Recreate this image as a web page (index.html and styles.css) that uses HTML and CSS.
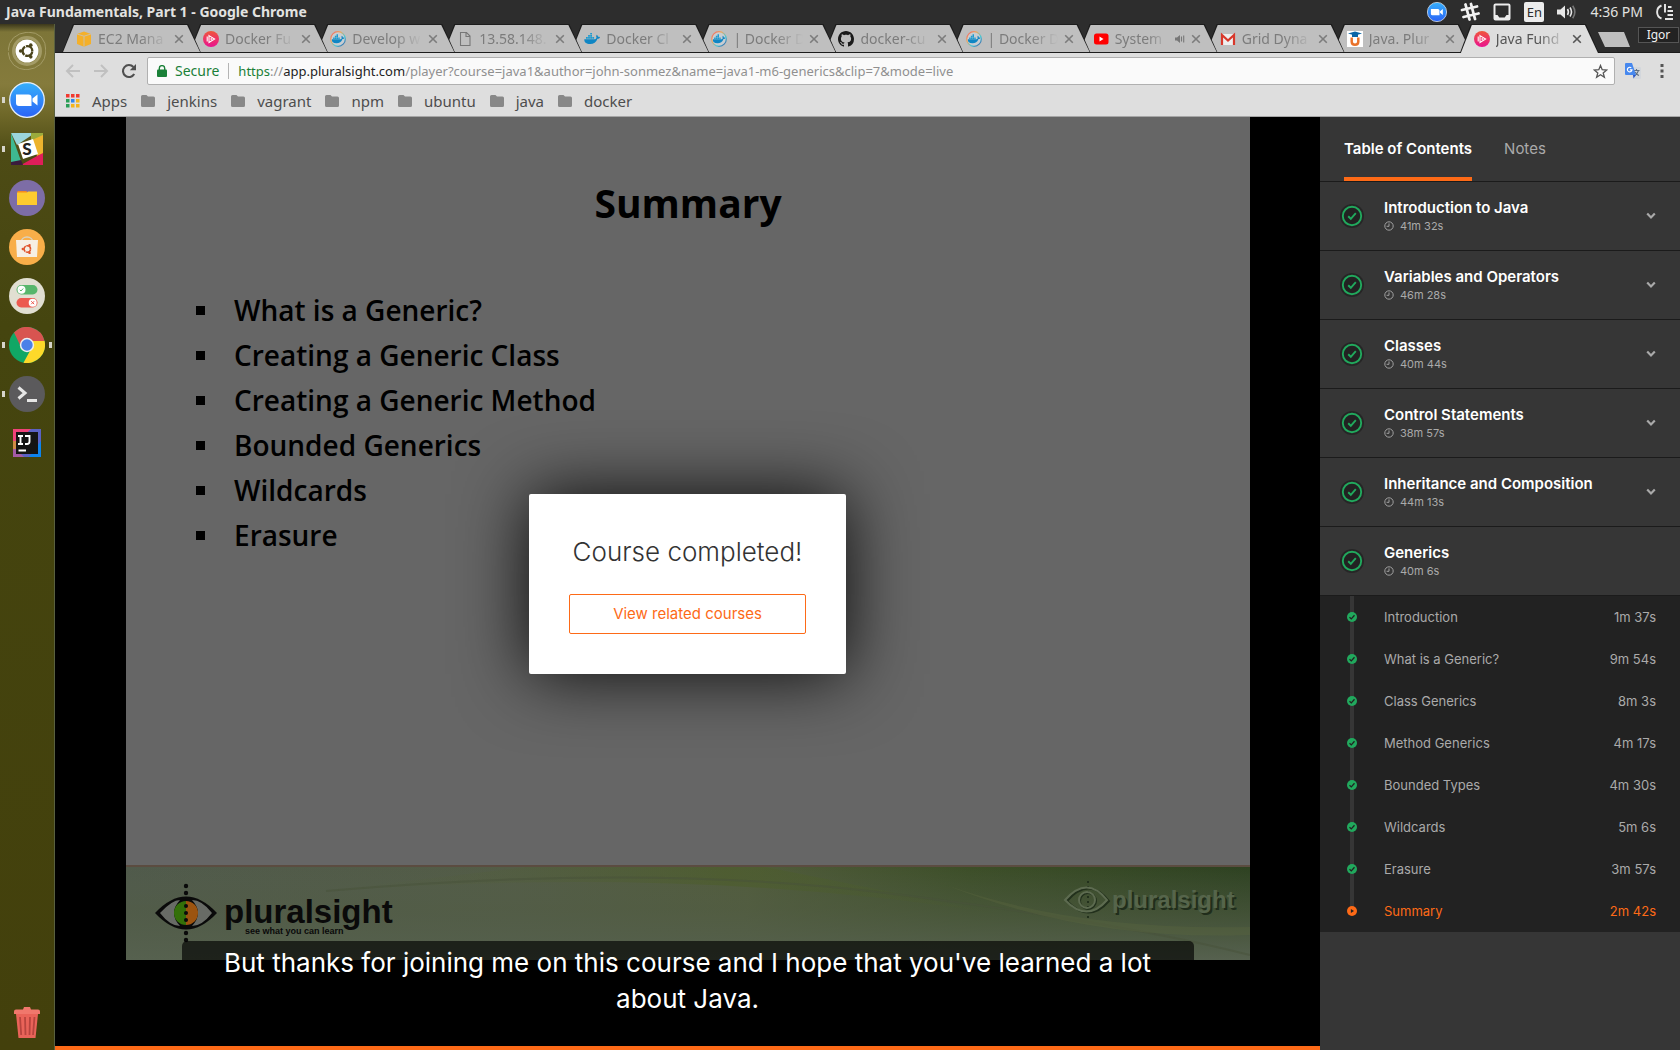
FILE: index.html
```html
<!DOCTYPE html>
<html lang="en">
<head>
<meta charset="utf-8">
<title>Java Fundamentals, Part 1 - Google Chrome</title>
<link rel="stylesheet" href="styles.css">
</head>
<body>
<svg class="defs" aria-hidden="true">
  <defs>
    <linearGradient id="ps" x1="0" y1="0" x2="0" y2="1"><stop offset="0" stop-color="#f0563a"/><stop offset="1" stop-color="#ea1290"/></linearGradient>
    <linearGradient id="zm" x1="0" y1="0" x2="0" y2="1"><stop offset="0" stop-color="#35b0fb"/><stop offset="1" stop-color="#2b63f6"/></linearGradient>
    <linearGradient id="ring" x1="0" y1="0" x2="1" y2="1"><stop offset="0" stop-color="#ee5c6c"/><stop offset=".35" stop-color="#f0a85a"/><stop offset=".65" stop-color="#41c9d8"/><stop offset="1" stop-color="#3b4a9a"/></linearGradient>
  </defs>
  <symbol id="i-close" viewBox="0 0 10 10"><path d="M1.2 1.2l7.6 7.6M8.8 1.2L1.2 8.8" fill="none" stroke="currentColor" stroke-width="1.6"/></symbol>
  <symbol id="i-folder" viewBox="0 0 14 12"><path d="M0 1.500Q0 0 1.500 0H5.500L7 1.500H12.500Q14 1.500 14 3V10.500Q14 12 12.500 12H1.500Q0 12 0 10.500Z" fill="#888"/></symbol>
  <symbol id="i-ps" viewBox="0 0 16 16"><circle cx="8" cy="8" r="8" fill="url(#ps)"/><path d="M6 4.600L11.600 8 6 11.400zM4.200 5.500v5" fill="none" stroke="#fff" stroke-width="1.100"/><path d="M7.600 6.700L9.800 8 7.600 9.300z" fill="#fff"/></symbol>
  <symbol id="i-whale" viewBox="0 0 16 16"><path d="M.3 8.200h10.800c.8-.2 1.400-.8 1.400-1.700-.5-.9-.4-1.900.3-2.700.8.5 1.200 1.200 1.200 2 .7-.1 1.400 0 2 .4-.4 1-1.300 1.500-2.500 1.500C12.300 11.300 9.600 13 6.200 13 2.200 13 .1 11.300.3 8.200z" fill="#0f86c4"/><path d="M2 6h1.800v1.800H2zM4.100 6h1.800v1.800H4.100zM6.200 6H8v1.800H6.200zM8.300 6h1.800v1.800H8.300zM4.100 3.900h1.800v1.800H4.100zM6.200 3.900H8v1.800H6.200zM6.200 2H8v1.600H6.200z" fill="#1c9bd0"/></symbol>
  <symbol id="i-dockerdoc" viewBox="0 0 16 16"><circle cx="8" cy="8" r="7.300" fill="#c8cdd2" stroke="url(#ring)" stroke-width="1.200"/><use href="#i-whale" x="1.500" y="1.700" width="13" height="13"/></symbol>
  <symbol id="i-tick" viewBox="0 0 24 24"><circle cx="12" cy="12" r="12" fill="#262626"/><circle cx="12" cy="12" r="9.200" fill="#222" stroke="#21a95d" stroke-width="1.900"/><path d="M8.200 12.300l2.600 2.500 5-5.600" fill="none" stroke="#21a95d" stroke-width="1.900"/></symbol>
  <symbol id="i-clock" viewBox="0 0 10 10"><circle cx="5" cy="5" r="4.200" fill="none" stroke="#a0a0a0"/><path d="M5 2.400V5.300H2.600" fill="none" stroke="#a0a0a0"/></symbol>
  <symbol id="i-down" viewBox="0 0 10 8"><path d="M1.200 1.500L5 5.400 8.800 1.500" fill="none" stroke="#a9a9a9" stroke-width="2.200"/></symbol>
  <symbol id="i-done" viewBox="0 0 10 10"><circle cx="5" cy="5" r="5" fill="#21a95d"/><path d="M2.500 5.200l1.800 1.700 3.200-3.600" fill="none" stroke="#222" stroke-width="1.300"/></symbol>
  <symbol id="i-playing" viewBox="0 0 10 10"><circle cx="5" cy="5" r="5" fill="#fd6a17"/><path d="M3.900 2.900L7 5 3.900 7.100z" fill="#222"/></symbol>
  <symbol id="i-zoom" viewBox="0 0 36 36"><circle cx="18" cy="18" r="17.300" fill="url(#zm)" stroke="#e4eefb" stroke-width="1.300"/><path d="M7 12.500h12.500q3 0 3 3v8.500H10q-3 0-3-3zM23.500 16.500l5-4v11l-5-4z" fill="#fff"/></symbol>
  <symbol id="i-ubuntu" viewBox="0 0 20 20"><circle cx="10.500" cy="10" r="5.400" fill="none" stroke="currentColor" stroke-width="2.600" stroke-dasharray="10.310 1" stroke-dashoffset="-.5"/><circle cx="3" cy="10" r="2" fill="currentColor"/><circle cx="14.200" cy="3.500" r="2" fill="currentColor"/><circle cx="14.200" cy="16.500" r="2" fill="currentColor"/></symbol>
</svg>

<header class="panel">
  <span class="panel-title">Java Fundamentals, Part 1 - Google Chrome</span>
  <div class="tray">
    <svg width="20" height="20"><use href="#i-zoom"/></svg>
    <svg width="20" height="20" viewBox="0 0 20 20"><path d="M5.500 2.500l4 15M11 2l4 15M2 8l15-3.500M3.500 15l15-3.500" stroke="#f2f2f2" stroke-width="2.800" stroke-linecap="round"/></svg>
    <svg width="18" height="18" viewBox="0 0 18 18"><path d="M2.500 1.500h13q1 0 1 1v13q0 1-1 1h-13q-1 0-1-1v-13q0-1 1-1z" fill="none" stroke="#ececec" stroke-width="2"/><path d="M2 12h2.500l1.800 2.500h5.400L13.500 12H16v4H2z" fill="#ececec"/></svg>
    <span class="lang">En</span>
    <svg width="20" height="16" viewBox="0 0 20 16"><path d="M0 5.500h3.500L8 1.500v13L3.500 10.500H0z" fill="#e6e6e6"/><path d="M10.500 5q1.800 3 0 6M13 3.500q3 4.500 0 9" fill="none" stroke="#e6e6e6" stroke-width="1.600"/><path d="M15.700 1.800q4.300 6.200 0 12.400" fill="none" stroke="#777" stroke-width="1.600"/></svg>
    <time>4:36 PM</time>
    <svg width="18" height="18" viewBox="0 0 18 18"><path d="M5.500 2.500a7 7 0 0 0 0 13M9 1v8.500M12 4h3.500M11.500 8H17M11.500 12H17M9 16h8" fill="none" stroke="#e6e6e6" stroke-width="1.900"/></svg>
  </div>
</header>

<nav class="launcher" aria-label="Launcher">
  <a href="#" aria-label="Dash"><svg width="38" height="38" viewBox="0 0 38 38"><path d="M0 19Q1 2 20 0M38 19Q37 36 18 38M19 0Q38 0 38 20M19 38Q2 37 0 20" fill="none" stroke="#a39b66" stroke-width="1"/><circle cx="19" cy="19" r="13.500" fill="none" stroke="#a39b66" stroke-width="3"/><circle cx="19" cy="19" r="11.500" fill="#fff"/><g color="#4b441c"><use href="#i-ubuntu" x="10" y="10" width="18" height="18"/></g></svg></a>
  <a href="#" aria-label="Zoom" class="running"><svg width="36" height="36"><use href="#i-zoom"/></svg></a>
  <a href="#" aria-label="Slack" class="running"><svg width="32" height="32" viewBox="0 0 32 32"><path d="M0 0h24L6 12z" fill="#9bd5dd"/><path d="M20 0h12v4L20 8z" fill="#9aab3c"/><path d="M32 2v19l-6 2-5-16z" fill="#ecb32e"/><path d="M32 20v12H10l16-9z" fill="#e01e5a"/><path d="M0 0l10 28-10 3z" fill="#3eb991"/><path d="M0 29l10-2 2 5H0z" fill="#3a1c3c"/><path d="M7 11l15-5 5 15-15 5z" fill="#fff"/><text x="16" y="22" class="slack-s">S</text></svg></a>
  <a href="#" aria-label="Files"><svg width="36" height="36" viewBox="0 0 36 36"><circle cx="18" cy="18" r="18" fill="#7d6da6"/><path d="M8.500 11h9l1 2h-10z" fill="#f58a1f"/><path d="M8 12.500h10l1-1H28V25H8z" fill="#fecb2f"/></svg></a>
  <a href="#" aria-label="Software"><svg width="36" height="36" viewBox="0 0 36 36"><circle cx="18" cy="18" r="18" fill="#f8ae49"/><path d="M12 14c0-8 12-8 12 0" fill="none" stroke="#d9d2c0" stroke-width="1.500"/><path d="M7 11h22l-1 17H8z" fill="#f6efe4"/><g color="#e0532b"><use href="#i-ubuntu" x="12" y="14" width="12" height="12"/></g></svg></a>
  <a href="#" aria-label="Settings"><svg width="36" height="36" viewBox="0 0 36 36"><circle cx="18" cy="18" r="18" fill="#e1dfd2"/><rect x="7.500" y="7" width="21" height="9.500" rx="4.700" fill="#57b66c"/><circle cx="12.500" cy="11.700" r="4" fill="#fff"/><path d="M10.800 11.800l1.200 1.200 2.200-2.500" fill="none" stroke="#57b66c"/><rect x="7.500" y="20" width="21" height="9.500" rx="4.700" fill="#ec5a50"/><circle cx="23.700" cy="24.700" r="4" fill="#fff"/><path d="M22.200 23.200l3 3M25.200 23.200l-3 3" stroke="#ec5a50"/></svg></a>
  <a href="#" aria-label="Chrome" class="running focused"><svg width="36" height="36" viewBox="0 0 36 36"><circle cx="18" cy="18" r="18" fill="#10a765"/><path d="M5 5.600A18 18 0 0 1 35.600 14H18l-7 4z" fill="#d85450"/><path d="M18 14H35.600A18 18 0 0 1 14.500 35.700L22 22z" fill="#fdd92a"/><circle cx="18" cy="18" r="7.200" fill="#eee"/><circle cx="18" cy="18" r="5.700" fill="#4a80e8"/></svg></a>
  <a href="#" aria-label="Terminal" class="running"><svg width="36" height="36" viewBox="0 0 36 36"><circle cx="18" cy="18" r="18" fill="#5b5a5c"/><path d="M9.500 11.500L16 17l-6.500 5.500" fill="none" stroke="#e6e6e6" stroke-width="3"/><path d="M18 23h10v3H18z" fill="#e6e6e6"/></svg></a>
  <a href="#" aria-label="IntelliJ IDEA"><svg width="28" height="28" viewBox="0 0 28 28"><path d="M0 0h28v28H0z" fill="#5a62c4"/><path d="M0 0h18L3 14H0z" fill="#f0427a"/><path d="M0 12h3v9H0z" fill="#cf8a45"/><path d="M28 12v16H16z" fill="#0d84ec"/><path d="M0 20h3l8 8H0z" fill="#a45aa6"/><path d="M3 3h22v22H3z" fill="#141414"/><path d="M5 7h5M7.500 7v8M5 15h5M12 7h4.500v5.500q0 2.500-2.500 2.500h-2M5.500 21.500H13" fill="none" stroke="#fff" stroke-width="1.900"/></svg></a>
  <a href="#" aria-label="Trash" class="trash"><svg width="28" height="32" viewBox="0 0 28 32"><path d="M3 8h22l-2.500 24h-17z" fill="#e96359"/><path d="M7 11l1.200 18M12 11l.5 18M17 11l-.5 18M21.500 11l-1.500 18" stroke="#b8443e" stroke-width="1.800"/><path d="M1 5.500Q1 3.500 3 3.500h7L11 1h6l1 2.500h7q2 0 2 2V8H1z" fill="#f0776c"/></svg></a>
</nav>

<div class="browser">
  <div class="tabstrip">
    <ul class="tabs">
      <li class="tab"><svg width="16" height="16" viewBox="0 0 16 16"><path d="M1 3l7-2.500L15 3v10l-7 2.700L1 13z" fill="#f4b02a"/><path d="M1 3l7 2.200L15 3M8 5.200v10.500" fill="none" stroke="#c9c2b0" stroke-width=".9"/></svg><a href="#">EC2 Mana</a><button aria-label="Close tab"><svg width="10" height="10"><use href="#i-close"/></svg></button></li>
      <li class="tab"><svg width="16" height="16"><use href="#i-ps"/></svg><a href="#">Docker Fu</a><button aria-label="Close tab"><svg width="10" height="10"><use href="#i-close"/></svg></button></li>
      <li class="tab"><svg width="16" height="16"><use href="#i-dockerdoc"/></svg><a href="#">Develop w</a><button aria-label="Close tab"><svg width="10" height="10"><use href="#i-close"/></svg></button></li>
      <li class="tab"><svg width="16" height="16" viewBox="0 0 16 16"><path d="M3.500 1.500h6l3.500 3.500v9.500H3.500zM9 1.500V5.500h4" fill="none" stroke="#777" stroke-width="1.100"/></svg><a href="#">13.58.148.</a><button aria-label="Close tab"><svg width="10" height="10"><use href="#i-close"/></svg></button></li>
      <li class="tab"><svg width="16" height="16"><use href="#i-whale"/></svg><a href="#">Docker Cl</a><button aria-label="Close tab"><svg width="10" height="10"><use href="#i-close"/></svg></button></li>
      <li class="tab"><svg width="16" height="16"><use href="#i-dockerdoc"/></svg><a href="#">| Docker D</a><button aria-label="Close tab"><svg width="10" height="10"><use href="#i-close"/></svg></button></li>
      <li class="tab"><svg width="16" height="16" viewBox="0 0 16 16"><path fill="#1b1b1b" d="M8 0C3.580 0 0 3.580 0 8c0 3.540 2.290 6.530 5.470 7.590.4.070.55-.17.55-.38 0-.19-.01-.82-.01-1.490-2.010.37-2.530-.49-2.690-.94-.09-.23-.48-.94-.82-1.130-.28-.15-.68-.52-.01-.53.63-.01 1.080.58 1.230.82.72 1.210 1.870.87 2.330.66.070-.52.28-.87.51-1.070-1.780-.2-3.640-.89-3.640-3.950 0-.87.31-1.590.82-2.150-.08-.2-.36-1.020.08-2.120 0 0 .67-.21 2.200.82.64-.18 1.320-.27 2-.27s1.360.09 2 .27c1.530-1.040 2.200-.82 2.200-.82.44 1.100.16 1.920.08 2.120.51.56.82 1.270.82 2.150 0 3.070-1.870 3.750-3.650 3.950.29.25.54.73.54 1.480 0 1.070-.01 1.930-.01 2.200 0 .21.15.46.55.38A8.010 8.010 0 0 0 16 8c0-4.420-3.580-8-8-8z"/></svg><a href="#">docker-cu</a><button aria-label="Close tab"><svg width="10" height="10"><use href="#i-close"/></svg></button></li>
      <li class="tab"><svg width="16" height="16"><use href="#i-dockerdoc"/></svg><a href="#">| Docker D</a><button aria-label="Close tab"><svg width="10" height="10"><use href="#i-close"/></svg></button></li>
      <li class="tab"><svg width="16" height="16" viewBox="0 0 16 16"><rect x="1" y="2.500" width="14.500" height="11" rx="2.500" fill="#f00"/><path d="M6.500 5.500L10.500 8l-4 2.500z" fill="#fff"/></svg><a href="#">System</a><svg class="audio" width="10" height="10" viewBox="0 0 10 10"><path d="M0 3.500h2L5 1v8L2 6.500H0z" fill="#777"/><path d="M6.500 2.500v5M8.700 1.500v7" stroke="#777" stroke-width="1.100"/></svg><button aria-label="Close tab"><svg width="10" height="10"><use href="#i-close"/></svg></button></li>
      <li class="tab"><svg width="16" height="16" viewBox="0 0 16 16"><path d="M1 3h14v11H1z" fill="#eee"/><path d="M2 14V4l6 5.500L14 4v10" fill="none" stroke="#d8382b" stroke-width="2.200"/></svg><a href="#">Grid Dyna</a><button aria-label="Close tab"><svg width="10" height="10"><use href="#i-close"/></svg></button></li>
      <li class="tab"><svg width="16" height="16" viewBox="0 0 16 16"><path d="M0 0h16v16H0z" fill="#fff"/><path d="M1 2.500L8 .5l7 2-7 2zM5 3.500h6V6H5z" fill="#0a66a8"/><path d="M4.700 6.500v4.300q0 3 3.300 3 3.300 0 3.300-3V6.500" fill="none" stroke="#e9722a" stroke-width="2.500"/></svg><a href="#">Java. Plur</a><button aria-label="Close tab"><svg width="10" height="10"><use href="#i-close"/></svg></button></li>
      <li class="tab active"><svg width="16" height="16"><use href="#i-ps"/></svg><a href="#" aria-current="page">Java Fund</a><button aria-label="Close tab"><svg width="10" height="10"><use href="#i-close"/></svg></button></li>
    </ul>
    <button class="new-tab" aria-label="New tab"></button>
    <button class="profile">Igor</button>
  </div>

  <div class="toolbar">
    <div class="history">
      <button aria-label="Back"><svg width="16" height="16" viewBox="0 0 16 16"><path d="M15 8H2M8 2L2 8l6 6" fill="none" stroke="#c0c0c0" stroke-width="2"/></svg></button>
      <button aria-label="Forward"><svg width="16" height="16" viewBox="0 0 16 16"><path d="M1 8h13M8 2l6 6-6 6" fill="none" stroke="#c0c0c0" stroke-width="2"/></svg></button>
      <button aria-label="Reload"><svg width="16" height="16" viewBox="0 0 16 16"><path d="M13.200 11A6 6 0 1 1 12.400 4" fill="none" stroke="#4f4f4f" stroke-width="2.100"/><path d="M15 1v6.200H8.800z" fill="#4f4f4f"/></svg></button>
    </div>
    <div class="address">
      <svg width="10" height="12" viewBox="0 0 10 12"><rect x="0" y="4.500" width="10" height="7.500" rx="1" fill="#1a8038"/><path d="M2.300 5V3.300a2.700 2.700 0 0 1 5.400 0V5" fill="none" stroke="#1a8038" stroke-width="1.400"/></svg>
      <span class="secure">Secure</span>
      <span class="url" role="textbox" contenteditable="true" spellcheck="false" aria-label="Address"><span class="scheme">https</span>://<span class="host">app.pluralsight.com</span>/player?course=java1&amp;author=john-sonmez&amp;name=java1-m6-generics&amp;clip=7&amp;mode=live</span>
      <button aria-label="Bookmark this page"><svg width="15" height="15" viewBox="0 0 15 15"><path d="M7.500 1.500l1.700 4.200 4.500.3-3.500 2.900 1.200 4.400-3.900-2.500-3.900 2.500 1.200-4.400L1.300 6l4.500-.3z" fill="none" stroke="#555" stroke-width="1.300"/></svg></button>
    </div>
    <button aria-label="Translate"><svg width="16" height="16" viewBox="0 0 16 16"><path d="M6 4h9q1 0 1 1v10q0 1-1 1H8z" fill="#d3d7dc"/><path d="M8.500 7.500h6M11.500 6v1.500M13.300 8q-1 3-3.800 4.500M10 9q1.500 2.500 4 3.500" fill="none" stroke="#607080" stroke-width="1.100"/><path d="M1 0h6l4 12H1Q0 12 0 11V1Q0 0 1 0z" fill="#4788ee"/><path d="M8 12h3l-2.500 3.500z" fill="#2a56c6"/><path d="M6.300 4.900A2.300 2.300 0 1 0 7 6.800H4.800" fill="none" stroke="#fff" stroke-width="1.200"/></svg></button>
    <button aria-label="Menu"><svg width="22" height="14" viewBox="0 0 22 14"><path d="M9.500 0h3v3h-3zM9.500 5.500h3v3h-3zM9.500 11h3v3h-3z" fill="#555"/></svg></button>
  </div>

  <nav class="bookmarks" aria-label="Bookmarks">
    <a href="#"><svg width="14" height="14" viewBox="0 0 14 14"><path d="M0 0h3.500v3.500H0zM5 0h3.500v3.500H5zM10 0h3.500v3.500H10z" fill="#f1392f"/><path d="M0 5h3.500v3.500H0zM0 10h3.500v3.500H0z" fill="#2a9e56"/><path d="M5 5h3.500v3.500H5z" fill="#2f86ee"/><path d="M10 5h3.500v3.500H10zM5 10h3.500v3.500H5zM10 10h3.500v3.500H10z" fill="#f4b41c"/></svg>Apps</a>
    <a href="#"><svg width="14" height="12"><use href="#i-folder"/></svg>jenkins</a>
    <a href="#"><svg width="14" height="12"><use href="#i-folder"/></svg>vagrant</a>
    <a href="#"><svg width="14" height="12"><use href="#i-folder"/></svg>npm</a>
    <a href="#"><svg width="14" height="12"><use href="#i-folder"/></svg>ubuntu</a>
    <a href="#"><svg width="14" height="12"><use href="#i-folder"/></svg>java</a>
    <a href="#"><svg width="14" height="12"><use href="#i-folder"/></svg>docker</a>
  </nav>

  <div class="page">
    <main class="player">
      <section class="slide">
        <h1>Summary</h1>
        <ul>
          <li>What is a Generic?</li>
          <li>Creating a Generic Class</li>
          <li>Creating a Generic Method</li>
          <li>Bounded Generics</li>
          <li>Wildcards</li>
          <li>Erasure</li>
        </ul>
        <svg class="slide-footer" viewBox="0 0 1124 95">
          <defs>
            <linearGradient id="fa" x1="0" y1="0" x2="1" y2="0"><stop offset="0" stop-color="#505a4b"/><stop offset=".35" stop-color="#535c46"/><stop offset=".55" stop-color="#515c3b"/><stop offset=".75" stop-color="#3c4e27"/><stop offset="1" stop-color="#2d4120"/></linearGradient>
            <linearGradient id="fb" x1="0" y1="0" x2="0" y2="1"><stop offset="0" stop-color="#566150" stop-opacity="0"/><stop offset=".45" stop-color="#525d47" stop-opacity=".5"/><stop offset="1" stop-color="#56614f"/></linearGradient>
            <linearGradient id="fc" x1="0" y1="0" x2="1" y2="0"><stop offset="0" stop-color="#566044" stop-opacity="0"/><stop offset=".6" stop-color="#4c5d2a" stop-opacity=".6"/><stop offset="1" stop-color="#4c5d2a" stop-opacity="0"/></linearGradient>
          </defs>
          <path d="M0 0h1124v95H0z" fill="url(#fa)"/>
          <path d="M0 0h1124v95H0z" fill="url(#fb)"/>
          <path d="M180 28Q560-2 880 50L640 2H400Z" fill="url(#fc)"/>
          <path d="M200 26Q520-2 760 28T1124 90" fill="none" stroke="#47523a" stroke-opacity=".5" stroke-width="2"/>
          <path d="M820 20Q950 66 1124 62v8Q960 76 820 20z" fill="#5b6840" fill-opacity=".35"/>
          <path d="M0 0h1124v2H0z" fill="#5b4c40"/>
          <g fill="#0a0a0a">
            <path d="M29 48Q60 15 91 48Q60 81 29 48z"/>
            <path d="M34 48Q46 35 54 35 42 48 54 61 44 61 34 48zM86 48Q76 35 66 35 78 48 66 61 76 61 86 48z" fill="#686b66"/>
            <path d="M60 36a12 12 0 0 0 0 24z" fill="#347009"/><path d="M60 36a12 12 0 0 1 0 24z" fill="#9c5410"/>
            <circle cx="60" cy="21" r="2.200"/><circle cx="60" cy="28" r="2.200"/><circle cx="60" cy="41" r="2"/><circle cx="60" cy="48" r="2"/><circle cx="60" cy="55" r="2"/><circle cx="60" cy="68" r="2.200"/><circle cx="60" cy="75" r="2.200"/>
            <text x="98" y="58" class="brand">pluralsight</text>
            <text x="119" y="69" class="motto">see what you can learn</text>
          </g>
          <g fill="none" stroke="#22301c" stroke-width="2"><path d="M941 36Q963 11 983 36Q963 59 941 36z"/><circle cx="962" cy="36" r="8"/><path d="M962 16v40" stroke-dasharray="2 3"/></g>
          <g fill="none" stroke="#5d6b50" stroke-width="2"><path d="M939 35Q961 10 981 35Q961 58 939 35z"/><circle cx="961" cy="35" r="8"/></g>
          <text x="986" y="43" class="brand-small">pluralsight</text>
        </svg>
      </section>
      <p class="caption">But thanks for joining me on this course and I hope that you've learned a lot about Java.</p>
      <div class="overlay">
        <section class="dialog" role="dialog" aria-labelledby="done-title">
          <h2 id="done-title">Course completed!</h2>
          <button>View related courses</button>
        </section>
      </div>
      <div class="progress"></div>
    </main>

    <aside class="sidebar">
      <div class="side-tabs"><button class="current">Table of Contents</button><button>Notes</button></div>
      <button class="module"><svg width="24" height="24"><use href="#i-tick"/></svg><span class="info"><span class="name">Introduction to Java</span><span class="time"><svg width="10" height="10"><use href="#i-clock"/></svg>41m 32s</span></span><svg width="10" height="8"><use href="#i-down"/></svg></button>
      <button class="module"><svg width="24" height="24"><use href="#i-tick"/></svg><span class="info"><span class="name">Variables and Operators</span><span class="time"><svg width="10" height="10"><use href="#i-clock"/></svg>46m 28s</span></span><svg width="10" height="8"><use href="#i-down"/></svg></button>
      <button class="module"><svg width="24" height="24"><use href="#i-tick"/></svg><span class="info"><span class="name">Classes</span><span class="time"><svg width="10" height="10"><use href="#i-clock"/></svg>40m 44s</span></span><svg width="10" height="8"><use href="#i-down"/></svg></button>
      <button class="module"><svg width="24" height="24"><use href="#i-tick"/></svg><span class="info"><span class="name">Control Statements</span><span class="time"><svg width="10" height="10"><use href="#i-clock"/></svg>38m 57s</span></span><svg width="10" height="8"><use href="#i-down"/></svg></button>
      <button class="module"><svg width="24" height="24"><use href="#i-tick"/></svg><span class="info"><span class="name">Inheritance and Composition</span><span class="time"><svg width="10" height="10"><use href="#i-clock"/></svg>44m 13s</span></span><svg width="10" height="8"><use href="#i-down"/></svg></button>
      <button class="module" aria-expanded="true"><svg width="24" height="24"><use href="#i-tick"/></svg><span class="info"><span class="name">Generics</span><span class="time"><svg width="10" height="10"><use href="#i-clock"/></svg>40m 6s</span></span></button>
      <ol class="clips">
        <li><a href="#"><svg width="10" height="10"><use href="#i-done"/></svg><span>Introduction</span><span>1m 37s</span></a></li>
        <li><a href="#"><svg width="10" height="10"><use href="#i-done"/></svg><span>What is a Generic?</span><span>9m 54s</span></a></li>
        <li><a href="#"><svg width="10" height="10"><use href="#i-done"/></svg><span>Class Generics</span><span>8m 3s</span></a></li>
        <li><a href="#"><svg width="10" height="10"><use href="#i-done"/></svg><span>Method Generics</span><span>4m 17s</span></a></li>
        <li><a href="#"><svg width="10" height="10"><use href="#i-done"/></svg><span>Bounded Types</span><span>4m 30s</span></a></li>
        <li><a href="#"><svg width="10" height="10"><use href="#i-done"/></svg><span>Wildcards</span><span>5m 6s</span></a></li>
        <li><a href="#"><svg width="10" height="10"><use href="#i-done"/></svg><span>Erasure</span><span>3m 57s</span></a></li>
        <li class="playing"><a href="#"><svg width="10" height="10"><use href="#i-playing"/></svg><span>Summary</span><span>2m 42s</span></a></li>
      </ol>
    </aside>
  </div>
</div>
</body>
</html>
```
FILE: styles.css
```css
* { box-sizing: border-box; }

body {
  margin: 0;
  min-height: 100vh;
  display: grid;
  grid-template: 24px 1fr / 55px minmax(0, 1fr);
  background: #000;
  font: 14px/20px "Noto Sans", "Open Sans", sans-serif;
}

ul, ol { margin: 0; padding: 0; list-style: none; }
h1, h2, p { margin: 0; }
a { color: inherit; text-decoration: none; }
svg { display: block; flex: none; }

button {
  padding: 0;
  border: 0;
  background: none;
  color: inherit;
  font: inherit;
  text-align: left;
}

.defs { position: absolute; width: 0; height: 0; }

/* Desktop panel */
.panel {
  grid-column: 1 / -1;
  display: flex;
  align-items: center;
  justify-content: space-between;
  padding: 0 6px;
  background: #2d2d2d;
  color: #e2e2e0;
}
.panel-title { font-weight: 700; }
.tray { display: flex; align-items: center; gap: 13px; }
.lang {
  width: 20px;
  border-radius: 2px;
  background: #ececec;
  color: #2d2d2d;
  font-size: 13px;
  text-align: center;
}

/* Launcher */
.launcher {
  display: flex;
  flex-direction: column;
  padding: 2px 0 4px;
  border-right: 1px solid #596040;
  background: linear-gradient(#3c381c, #7d7538 8px, #857b3c 60px, #6f6829 90px, #4d4b15 130px, #45450f 300px, #43400c);
}
.launcher a {
  height: 49px;
  display: grid;
  place-items: center;
  position: relative;
}
.launcher .trash { margin-top: auto; }
.running::before, .focused::after {
  content: "";
  position: absolute;
  left: 2px;
  width: 3px;
  height: 6px;
  background: #d6d4ca;
}
.focused::after { left: auto; right: 2px; }
.slack-s {
  fill: #222;
  font: 900 17px Lato, sans-serif;
  text-anchor: middle;
}

/* Tab strip */
.browser { display: flex; flex-direction: column; min-width: 0; }
.tabstrip {
  display: flex;
  align-items: flex-start;
  height: 29px;
  padding-left: 7px;
  background: linear-gradient(#2d2d2d 28px, #1c1c1c 28px);
}
.tabs { flex: 0 1 1525px; display: flex; min-width: 0; }
.tab {
  flex: 1 1 0;
  display: flex;
  align-items: center;
  gap: 6px;
  height: 29px;
  min-width: 0;
  margin-right: -12px;
  padding: 0 17px 0 14px;
  position: relative;
  background: #1c1c1c;
  clip-path: polygon(11px 0, calc(100% - 13px) 0, 100% 100%, 0 100%);
  color: #7c7c7c;
}
.tab::before {
  content: "";
  position: absolute;
  inset: 1px;
  background: #bfbfbf;
  clip-path: polygon(11px 0, calc(100% - 13px) 0, 100% 100%, 0 100%);
}
.tab > * { position: relative; }
.tab a {
  flex: 1;
  min-width: 0;
  overflow: hidden;
  white-space: nowrap;
  mask-image: linear-gradient(90deg, #000 60%, transparent);
}
.tab:nth-child(1) { z-index: 12; }
.tab:nth-child(2) { z-index: 11; }
.tab:nth-child(3) { z-index: 10; }
.tab:nth-child(4) { z-index: 9; }
.tab:nth-child(5) { z-index: 8; }
.tab:nth-child(6) { z-index: 7; }
.tab:nth-child(7) { z-index: 6; }
.tab:nth-child(8) { z-index: 5; }
.tab:nth-child(9) { z-index: 4; }
.tab:nth-child(10) { z-index: 3; }
.tab:nth-child(11) { z-index: 2; }
.tab.active { z-index: 13; color: #555; }
.tab.active::before { background: #dedede; bottom: 0; }
.new-tab {
  width: 32px;
  height: 15px;
  margin: 8px 0 0 11px;
  background: #bfbfbf;
  clip-path: polygon(0 0, 26px 0, 100% 100%, 7px 100%);
}
.profile {
  width: 41px;
  height: 16px;
  margin: 3px 1px 0 auto;
  border: 1px solid #555;
  background: #222;
  color: #f0f0f0;
  font-size: 12px;
  line-height: 14px;
  text-align: center;
}

/* Toolbar */
.toolbar {
  display: flex;
  align-items: center;
  gap: 10px;
  padding: 4px 7px 0 10px;
  background: #dedede;
}
.history { display: flex; gap: 12px; }
.address {
  flex: 1;
  min-width: 0;
  display: flex;
  align-items: center;
  height: 28px;
  padding: 0 6px 0 9px;
  border: 1px solid #b0b0b0;
  border-radius: 2px;
  background: #fafafa;
}
.secure {
  margin: 0 9px 0 8px;
  padding-right: 9px;
  border-right: 1px solid #b4b4b4;
  color: #1a8038;
  line-height: 16px;
}
.url {
  flex: 1;
  min-width: 0;
  overflow: hidden;
  white-space: nowrap;
  color: #909090;
  font-size: 13px;
}
.scheme { color: #1a8038; }
.host { color: #222; }

.bookmarks {
  display: flex;
  gap: 14px;
  height: 32px;
  padding: 1px 11px 0;
  border-bottom: 1px solid #a6a6a6;
  background: #dedede;
  color: #4d4d4d;
  font-size: 15px;
}
.bookmarks a { display: flex; align-items: center; gap: 12px; }

/* Course player */
.page {
  flex: 1;
  display: flex;
  font-family: Inter, "Open Sans", sans-serif;
}
.player {
  flex: 1;
  min-width: 0;
  position: relative;
  padding: 0 70px 0 71px;
  background: #000;
}
.slide {
  display: flex;
  flex-direction: column;
  aspect-ratio: 4 / 3;
  padding-top: 58px;
  background: #666;
  color: #000;
  font-family: "Open Sans", sans-serif;
}
.slide h1 {
  font-size: 39px;
  line-height: 56px;
  font-weight: 700;
  text-align: center;
}
.slide ul { padding: 57px 70px 0; }
.slide li {
  display: flex;
  align-items: center;
  gap: 29px;
  font-size: 28px;
  line-height: 45px;
  font-weight: 600;
}
.slide li::before {
  content: "";
  width: 9px;
  height: 9px;
  background: #000;
}
.slide-footer { width: 100%; margin-top: auto; }
.brand { font: 700 33px "Liberation Sans Narrow", "Liberation Sans", sans-serif; }
.motto { font: 700 9px "Liberation Sans Narrow", "Liberation Sans", sans-serif; }
.brand-small {
  fill: #56654b;
  font: 700 24px "Liberation Sans Narrow", "Liberation Sans", sans-serif;
  text-shadow: 2px 2px #202d1b;
}

.caption {
  position: absolute;
  left: 10%;
  right: 10%;
  bottom: 29px;
  padding: 4px 16px;
  border-radius: 5px;
  background: rgba(0, 0, 0, .65);
  color: #fff;
  font-size: 26px;
  line-height: 36px;
  text-align: center;
}
.overlay {
  position: absolute;
  inset: 0;
  display: grid;
  place-items: center;
}
.dialog {
  width: 317px;
  padding: 40px;
  border-radius: 2px;
  background: #fff;
  box-shadow: 0 0 70px rgba(0, 0, 0, .9);
  text-align: center;
}
.dialog h2 {
  margin-bottom: 24px;
  color: #333;
  font-size: 26px;
  line-height: 36px;
  font-weight: 300;
  white-space: nowrap;
}
.dialog button {
  width: 100%;
  height: 40px;
  border: 1px solid #fd6a17;
  border-radius: 2px;
  color: #fd6a17;
  font-size: 15px;
  text-align: center;
}
.progress {
  position: absolute;
  left: 0;
  right: 0;
  bottom: 0;
  height: 4px;
  background: #fd6a17;
}

/* Table of contents */
.sidebar {
  flex: none;
  width: 360px;
  background: #363636;
  color: #aaa;
}
.side-tabs {
  display: flex;
  gap: 32px;
  height: 65px;
  padding: 0 24px;
  border-bottom: 1px solid #1b1b1b;
  font-size: 15px;
}
.side-tabs button { border-bottom: 4px solid transparent; padding-top: 4px; }
.side-tabs .current {
  border-color: #fd6a17;
  color: #fff;
  font-weight: 600;
}
.module {
  display: flex;
  align-items: center;
  gap: 20px;
  width: 100%;
  height: 69px;
  padding: 0 24px 0 20px;
  border-bottom: 1px solid #1b1b1b;
}
.info { flex: 1; }
.name {
  display: block;
  color: #fff;
  font-size: 15px;
  line-height: 20px;
  font-weight: 600;
}
.time {
  display: flex;
  align-items: center;
  gap: 6px;
  font-size: 11px;
  line-height: 16px;
}
.clips {
  background: linear-gradient(#363636, #363636) 30px 0 / 4px 310px no-repeat #222;
  font-size: 13px;
}
.clips a {
  display: flex;
  align-items: center;
  height: 42px;
  padding: 0 24px 0 27px;
}
.clips svg { margin-right: 27px; }
.clips span:last-child { margin-left: auto; }
.playing { color: #fd6a17; }
```
